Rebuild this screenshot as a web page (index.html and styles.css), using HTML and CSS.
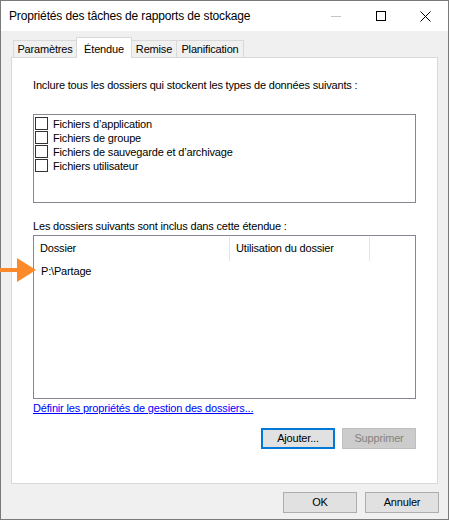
FILE: index.html
```html
<!DOCTYPE html>
<html lang="fr">
<head>
<meta charset="utf-8">
<title>Propriétés des tâches de rapports de stockage</title>
<link rel="stylesheet" href="styles.css">
</head>
<body>
<div class="window">
  <div class="titlebar">
    <div class="title">Propriétés des tâches de rapports de stockage</div>
    <div class="controls">
      <div class="ctl"><svg width="10" height="10" viewBox="0 0 10 10"><line x1="0" y1="5.5" x2="10" y2="5.5" stroke="#c4c4c4" stroke-width="1"/></svg></div>
      <div class="ctl"><svg width="10" height="10" viewBox="0 0 10 10"><rect x="0.5" y="0.5" width="9" height="9" fill="none" stroke="#000" stroke-width="1"/></svg></div>
      <div class="ctl"><svg width="11" height="11" viewBox="0 0 11 11"><path d="M0.5 0.5 L10.5 10.5 M10.5 0.5 L0.5 10.5" stroke="#000" stroke-width="1" fill="none"/></svg></div>
    </div>
  </div>
  <div class="client">
    <div class="tabs">
      <div class="tab t1">Paramètres</div>
      <div class="tab t2 selected">Étendue</div>
      <div class="tab t3">Remise</div>
      <div class="tab t4">Planification</div>
    </div>
    <div class="panel">
      <div class="label first">Inclure tous les dossiers qui stockent les types de données suivants :</div>
      <div class="checklist">
        <div class="check"><span class="box"></span><span>Fichiers d’application</span></div>
        <div class="check"><span class="box"></span><span>Fichiers de groupe</span></div>
        <div class="check"><span class="box"></span><span>Fichiers de sauvegarde et d’archivage</span></div>
        <div class="check"><span class="box"></span><span>Fichiers utilisateur</span></div>
      </div>
      <div class="label second">Les dossiers suivants sont inclus dans cette étendue :</div>
      <div class="listview">
        <div class="lv-header">
          <div class="col c1">Dossier</div>
          <div class="col c2">Utilisation du dossier</div>
        </div>
        <div class="lv-row">P:\Partage</div>
        <svg class="arrow" width="37" height="25" viewBox="0 0 37 25"><rect x="0" y="10" width="18" height="4" fill="#fd8a2a"/><polygon points="17,0 36,12 17,24" fill="#fd8a2a"/></svg>
      </div>
      <a class="link" href="#">Définir les propriétés de gestion des dossiers...</a>
      <div class="panel-buttons">
        <div class="btn focused">Ajouter...</div>
        <div class="btn disabled">Supprimer</div>
      </div>
    </div>
    <div class="footer">
      <div class="btn">OK</div>
      <div class="btn">Annuler</div>
    </div>
  </div>
</div>
</body>
</html>
```

FILE: styles.css
```css
html, body {
  margin: 0;
  padding: 0;
  background: #ffffff;
}
.window {
  width: 449px;
  height: 520px;
  box-sizing: border-box;
  border: 1px solid #7a7a7a;
  display: flex;
  flex-direction: column;
  font-family: "Liberation Sans", Arial, sans-serif;
  font-size: 11px;
  line-height: 13px;
  letter-spacing: -0.17px;
  color: #000;
  position: relative;
}
.titlebar {
  height: 30px;
  background: #ffffff;
  display: flex;
  align-items: center;
  flex-shrink: 0;
}
.title {
  flex: 1;
  padding-left: 8px;
  font-size: 12px;
  line-height: 16px;
  letter-spacing: -0.15px;
  margin-top: -1px;
}
.controls {
  display: flex;
  height: 30px;
}
.ctl {
  width: 45px;
  height: 30px;
  display: flex;
  align-items: center;
  justify-content: center;
}
.ctl svg { display: block; }
.client {
  flex: 1;
  background: #f0f0f0;
  padding-left: 10px;
  display: flex;
  flex-direction: column;
}
.tabs {
  display: flex;
  align-items: flex-end;
  height: 21px;
  margin: 6px 0 -1px 2px;
  position: relative;
  z-index: 2;
}
.tab {
  box-sizing: border-box;
  height: 17px;
  margin-bottom: 1px;
  border: 1px solid #d9d9d9;
  border-bottom: none;
  background: #f0f0f0;
  text-align: center;
  padding-top: 2px;
  white-space: nowrap;
}
.t1 { width: 64px; }
.t2 { width: 56px; margin-left: -1px; }
.t3 { width: 46px; margin-left: -1px; }
.t4 { width: 68px; margin-left: -1px; }
.tab.selected {
  height: 21px;
  margin-bottom: 0;
  background: #ffffff;
  padding-top: 5px;
  position: relative;
  z-index: 3;
}
.panel {
  width: 427px;
  height: 427px;
  box-sizing: border-box;
  border: 1px solid #d9d9d9;
  background: #ffffff;
  padding: 0 21px;
  display: flex;
  flex-direction: column;
}
.label.first { margin-top: 21px; }
.label.second { margin-top: 17px; }
.checklist {
  margin-top: 22px;
  height: 89px;
  box-sizing: border-box;
  border: 1px solid #828790;
  padding: 2px 0 0 1px;
}
.check {
  display: flex;
  align-items: center;
  height: 14px;
  line-height: 14px;
}
.check .box {
  width: 13px;
  height: 13px;
  box-sizing: border-box;
  border: 1px solid #333333;
  background: #ffffff;
  margin-right: 5px;
  margin-bottom: 1px;
  flex-shrink: 0;
}
.listview {
  margin-top: 2px;
  height: 164px;
  box-sizing: border-box;
  border: 1px solid #828790;
  position: relative;
}
.lv-header {
  display: flex;
  height: 25px;
}
.col {
  box-sizing: border-box;
  height: 24px;
  margin-top: 1px;
  border-right: 1px solid #e5e5e5;
  padding: 5px 0 0 6px;
  white-space: nowrap;
}
.c1 { width: 196px; }
.c2 { width: 140px; }
.lv-row {
  padding: 4px 0 0 7px;
}
.arrow {
  position: absolute;
  left: -34px;
  top: 22px;
}
.link {
  margin-top: 3px;
  color: #0000ff;
  text-decoration: underline;
  align-self: flex-start;
}
.panel-buttons {
  display: flex;
  justify-content: flex-end;
  gap: 7px;
  margin-top: 13px;
}
.btn {
  box-sizing: border-box;
  width: 74px;
  height: 21px;
  border: 1px solid #adadad;
  background: #e1e1e1;
  display: flex;
  align-items: center;
  justify-content: center;
  white-space: nowrap;
}
.btn.focused {
  border: 2px solid #0078d7;
}
.btn.disabled {
  border-color: #bfbfbf;
  background: #cccccc;
  color: #838383;
}
.footer {
  display: flex;
  justify-content: flex-end;
  gap: 8px;
  margin-top: 8px;
  padding-right: 9px;
}
```
